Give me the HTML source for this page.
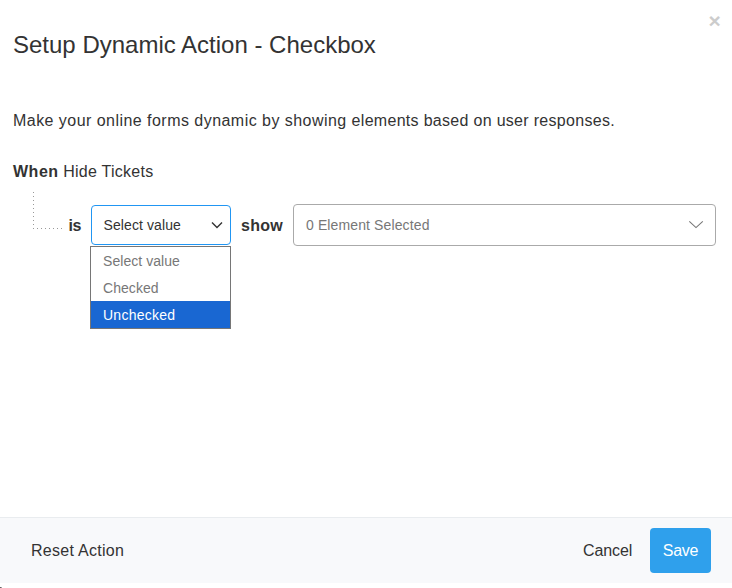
<!DOCTYPE html>
<html lang="en">
<head>
<meta charset="utf-8">
<title>Setup Dynamic Action - Checkbox</title>
<style>
*{box-sizing:border-box;margin:0;padding:0}
html,body{width:732px;height:588px;overflow:hidden;background:#fff}
body{position:relative;font-family:"Liberation Sans",sans-serif;font-size:16px;color:#333;letter-spacing:.37px}
.abs{position:absolute;white-space:nowrap;line-height:1}
#close{left:708.5px;top:10px;font-size:21px;font-weight:bold;color:#ccc;letter-spacing:0;font-family:"Liberation Sans",sans-serif}
#title{left:13px;top:33px;font-size:24px;letter-spacing:0;color:#333}
#desc{left:13px;top:113px;letter-spacing:.39px}
#when{left:13px;top:164px;letter-spacing:.25px}
#when b{letter-spacing:.5px}
#tree{left:33px;top:192px;width:29px;height:37px;background:repeating-linear-gradient(to bottom,#999 0 1px,transparent 1px 4px) left top/1px 100% no-repeat,repeating-linear-gradient(to right,#999 0 1px,transparent 1px 4px) left bottom/100% 1px no-repeat}
#is{left:68.5px;top:218px;font-weight:bold;letter-spacing:-.5px}
#sel{left:91px;top:205px;width:140px;height:40px;border:1px solid #2196f3;border-radius:4px;background:#fff}
#sel span{position:absolute;left:11.5px;top:12px;font-size:14px;color:#333;letter-spacing:.1px}
#sel svg{position:absolute;left:118.2px;top:13.8px}
#list{left:90px;top:246px;width:141px;height:83px;border:1px solid #767676;background:#fff;font-size:14px;letter-spacing:.05px}
#list div{height:27px;line-height:29px;overflow:hidden;padding-left:12px;color:#777}
#list div.on{background:#1967d2;color:#fff;letter-spacing:.25px}
#show{left:241px;top:218px;font-weight:bold;letter-spacing:.3px}
#multi{left:293px;top:204px;width:423px;height:42px;border:1px solid #aaa;border-radius:4px;background:#fff}
#multi span{position:absolute;left:12px;top:13px;font-size:14px;color:#777;letter-spacing:.12px}
#multi svg{position:absolute;left:393px;top:14px}
#footer{left:0;top:517px;width:732px;height:66px;background:#f8f9fb;border-top:1px solid #e9ecef}
#reset{left:31px;top:543px;letter-spacing:.28px}
#cancel{left:583px;top:543px;letter-spacing:-.1px}
#save{left:650px;top:528px;width:61px;height:45px;background:#2fa0ec;border-radius:4px;color:#fff;text-align:center;line-height:45px;letter-spacing:-.3px}
#corner{left:0;top:587px;width:2px;height:1px;background:linear-gradient(to right,#444,#bbb)}
</style>
</head>
<body>
<div class="abs" id="close">×</div>
<div class="abs" id="title">Setup Dynamic Action - Checkbox</div>
<div class="abs" id="desc"><span style="letter-spacing:.46px">Make your online forms dynamic by showing </span><span style="letter-spacing:.3px">elements based on user responses.</span></div>
<div class="abs" id="when"><b>When</b> Hide Tickets</div>
<div class="abs" id="tree"></div>
<div class="abs" id="is">is</div>
<div class="abs" id="sel"><span>Select value</span><svg width="14" height="10" viewBox="0 0 14 10"><path d="M2 2.5 L7 7.5 L12 2.5" fill="none" stroke="#333" stroke-width="1.4"/></svg></div>
<div class="abs" id="list"><div>Select value</div><div>Checked</div><div class="on">Unchecked</div></div>
<div class="abs" id="show">show</div>
<div class="abs" id="multi"><span>0 Element Selected</span><svg width="18" height="12" viewBox="0 0 18 12"><path d="M2.3 2.3 L9 8.6 L15.8 2.3" fill="none" stroke="#777" stroke-width="1.1"/></svg></div>
<div class="abs" id="footer"></div>
<div class="abs" id="reset">Reset Action</div>
<div class="abs" id="cancel">Cancel</div>
<div class="abs" id="save">Save</div>
<div class="abs" id="corner"></div>
</body>
</html>
